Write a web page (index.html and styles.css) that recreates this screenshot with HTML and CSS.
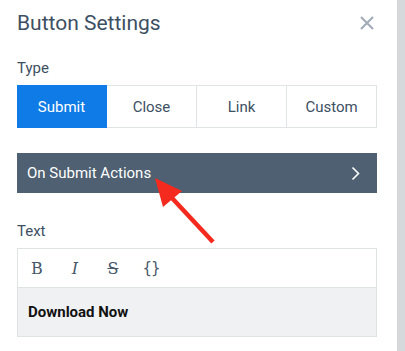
FILE: index.html
```html
<!DOCTYPE html>
<html lang="en">
<head>
  <meta charset="UTF-8">
  <meta name="viewport" content="width=device-width, initial-scale=1.0">
  <title>Button Settings</title>
  <link rel="stylesheet" href="styles.css">
</head>
<body>
  <!-- Panel -->
  <div class="panel">
    <div class="header">
      <h2>Button Settings</h2>
      <button class="close" aria-label="Close">
        <svg width="14" height="14" viewBox="0 0 14 14">
          <path d="M1 1L13 13M13 1L1 13" stroke="#a3adb8" stroke-width="2.2" fill="none"/>
        </svg>
      </button>
    </div>

    <!-- Tipo -->
    <div class="field type-field">
      <div class="label">Type</div>
      <div class="segments">
        <div class="segment active">Submit</div>
        <div class="segment">Close</div>
        <div class="segment">Link</div>
        <div class="segment">Custom</div>
      </div>
    </div>

    <div class="actions">
      <span>On Submit Actions</span>
      <svg width="9" height="15" viewBox="0 0 9 15">
        <path d="M1.5 1.5L7.5 7.5L1.5 13.5" stroke="#fff" stroke-width="1.6" fill="none"/>
      </svg>
    </div>

    <!-- Texto -->
    <div class="field text-field">
      <div class="label">Text</div>
      <div class="editor">
        <div class="toolbar">
          <span class="tool bold">B</span>
          <span class="tool italic">I</span>
          <span class="tool strike">S</span>
          <span class="tool braces">{}</span>
        </div>
        <div class="content">Download Now</div>
      </div>
    </div>
  </div>
  <div class="scrollbar"></div>

  <!-- Flecha roja -->
  <svg class="pointer" width="405" height="351" viewBox="0 0 405 351">
    <line x1="213" y1="242" x2="172" y2="198" stroke="#f42a1f" stroke-width="4.5"/>
    <polygon points="155,178 182,191 163,207" fill="#f42a1f"/>
  </svg>
</body>
</html>
```

FILE: styles.css
```css
/* General */
body {
  margin: 0;
  padding: 0;
  font-family: 'Roboto', sans-serif;
  background: #fff;
  color: #3d4f62;
  display: flex;
  height: 351px;
  overflow: hidden;
  position: relative;
}

.panel {
  width: 397px;
  box-sizing: border-box;
  padding: 11px 20px 0 17px;
}

.scrollbar {
  width: 8px;
  background: #d6d9dc;
}

/* Header */
.header {
  display: flex;
  align-items: center;
  justify-content: space-between;
}

.header h2 {
  margin: 0;
  font-size: 21px;
  font-weight: 400;
  line-height: 24px;
  color: #3d4f62;
}

.close {
  background: none;
  border: none;
  padding: 0;
  margin-right: 3px;
  display: flex;
}

/* Campos */
.field {
  display: flex;
  flex-direction: column;
  gap: 8px;
}

.type-field {
  margin-top: 24px;
}

.text-field {
  margin-top: 29px;
}

.label {
  font-size: 15px;
  line-height: 18px;
}

/* Botones de tipo */
.segments {
  display: grid;
  grid-template-columns: repeat(4, 1fr);
  height: 43px;
}

.segment {
  display: flex;
  align-items: center;
  justify-content: center;
  font-size: 15px;
  border: 1px solid #e1e4e7;
  border-left: none;
  color: #3d4f62;
}

.segment.active {
  background: #0f7be6;
  border-color: #0f7be6;
  color: #fff;
}

/* Barra de acciones */
.actions {
  margin-top: 25px;
  height: 40px;
  background: #4e6071;
  color: #fff;
  font-size: 15px;
  display: flex;
  align-items: center;
  justify-content: space-between;
  padding: 0 17px 0 10px;
}

/* Editor */
.editor {
  border: 1px solid #dfe2e5;
}

.toolbar {
  height: 38px;
  display: flex;
  align-items: center;
  border-bottom: 1px solid #dfe2e5;
}

.tool {
  width: 38px;
  text-align: center;
  font-family: 'DejaVu Serif', serif;
  font-size: 16px;
  color: #46586a;
}

.italic {
  font-style: italic;
}

.strike {
  text-decoration: line-through;
}

.braces {
  font-family: 'DejaVu Sans', sans-serif;
  font-size: 15px;
  letter-spacing: -1px;
}

.content {
  height: 48px;
  background: #f0f1f3;
  display: flex;
  align-items: center;
  padding-left: 10px;
  font-size: 15px;
  font-weight: 700;
  color: #111;
}

/* Flecha */
.pointer {
  position: absolute;
  left: 0;
  top: 0;
  pointer-events: none;
}
```
